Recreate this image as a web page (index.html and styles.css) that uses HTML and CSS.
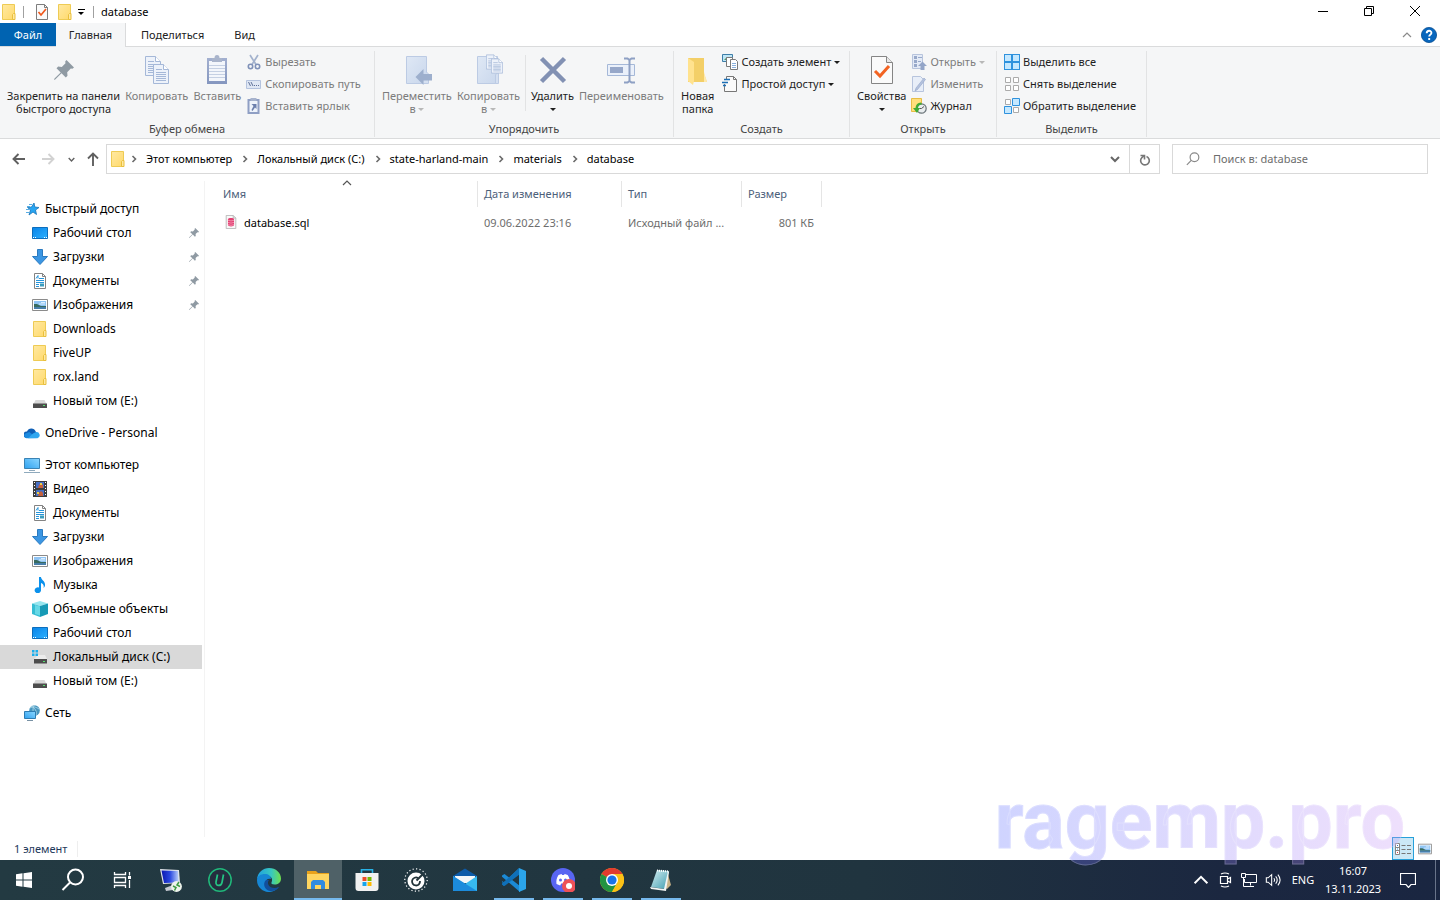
FILE: index.html
```html
<!DOCTYPE html>
<html lang="ru">
  <head>
    <meta charset="UTF-8" />
    <meta name="viewport" content="width=device-width, initial-scale=1.0" />
    <title>database</title>
    <link rel="stylesheet" href="styles.css">
  </head>
  <body>
    <svg class="sprite" aria-hidden="true">
      <defs>
        <linearGradient id="g-folder" x1="0" y1="0" x2="1" y2="1">
          <stop offset="0" stop-color="#ffe9a2"/><stop offset="1" stop-color="#ffd96b"/>
        </linearGradient>
        <linearGradient id="g-blue" x1="0" y1="0" x2="1" y2="1">
          <stop offset="0" stop-color="#0a84e8"/><stop offset="1" stop-color="#2bb0ff"/>
        </linearGradient>
        <linearGradient id="g-screen" x1="0" y1="1" x2="1" y2="0">
          <stop offset="0" stop-color="#2fa2f0"/><stop offset="1" stop-color="#8bd6ff"/>
        </linearGradient>
        <linearGradient id="g-pale" x1="0" y1="0" x2="1" y2="1">
          <stop offset="0" stop-color="#dfe8f5"/><stop offset="1" stop-color="#c9d7ec"/>
        </linearGradient>
        <linearGradient id="g-clip" x1="0" y1="0" x2="0" y2="1">
          <stop offset="0" stop-color="#a3b0d0"/><stop offset="1" stop-color="#8496bf"/>
        </linearGradient>
        <linearGradient id="g-edge" x1="0" y1="0" x2="1" y2="0">
          <stop offset="0" stop-color="#1fa0e0"/><stop offset=".6" stop-color="#38c8c0"/><stop offset="1" stop-color="#6fe04c"/>
        </linearGradient>
        <linearGradient id="g-note" x1="0" y1="0" x2="1" y2="1">
          <stop offset="0" stop-color="#d6eff2"/><stop offset="1" stop-color="#3f9db0"/>
        </linearGradient>
        <linearGradient id="g-rdp" x1="0" y1="0" x2="1" y2="0">
          <stop offset="0" stop-color="#0a18b0"/><stop offset=".5" stop-color="#2a48e0"/><stop offset="1" stop-color="#b8cdf8"/>
        </linearGradient>
      </defs>

      <symbol id="folder" viewBox="0 0 16 16">
        <path d="M1.500.500h12v15h-12z" fill="url(#g-folder)" stroke="#eecb54"/>
        <path d="M11.500 15.500v-5l1-1h1.500v6z" fill="#ffe9a2" stroke="#e9bf3c"/>
      </symbol>
      <symbol id="check-doc" viewBox="0 0 16 16">
        <path d="M2.500.500h8l3 3v12h-11z" fill="#fafafa" stroke="#7d7d7d"/>
        <path d="M10.500.500v3h3" fill="none" stroke="#7d7d7d"/>
        <path d="M4.500 8l2.500 3 5-6" fill="none" stroke="#f0581c" stroke-width="1.700"/>
      </symbol>
      <symbol id="caret" viewBox="0 0 6 3"><path d="M0 0h6L3 3z" fill="currentColor"/></symbol>
      <symbol id="chevron-right" viewBox="0 0 8 8"><path d="M2.500 1l3 3-3 3" fill="none" stroke="#6a6a6a" stroke-width="1.600"/></symbol>
      <symbol id="chevron-down" viewBox="0 0 10 10"><path d="M1 3l4 4 4-4" fill="none" stroke="currentColor" stroke-width="2"/></symbol>
      <symbol id="chevron-up" viewBox="0 0 10 10"><path d="M1 7l4-4 4 4" fill="none" stroke="currentColor" stroke-width="1.200"/></symbol>
      <symbol id="arrow" viewBox="0 0 14 14"><path d="M1.500 7H13M6.500 2l-5 5 5 5" fill="none" stroke="currentColor" stroke-width="1.900"/></symbol>
      <symbol id="arrow-up" viewBox="0 0 14 14"><path d="M7 1.500V14M2 6.500l5-5 5 5" fill="none" stroke="currentColor" stroke-width="1.900"/></symbol>

      <symbol id="pin" viewBox="0 0 20 20">
        <path d="M12.500 0L20 7.500l-1.600 1.300-1.600-.3-3.600 3.700.3 3.600-1.700 1.700-4.300-4.300L1.200 19.500 0 20l.5-1.400 6.200-6L2.500 8.300l1.700-1.800 3.600.4 3.700-3.700-.3-1.700z" fill="#8f9aa3"/>
      </symbol>
      <symbol id="sheet" viewBox="0 0 16 20">
        <path d="M.5.5h10l5 5v14H.5z" fill="#edf2fa" stroke="#a5b8d8"/>
        <path d="M10.500.500v5h5" fill="#fff" stroke="#a5b8d8"/>
        <path d="M3 5.500h6M3 8.500h10M3 10.500h10M3 12.500h10M3 14.500h10M3 16.500h10" stroke="#a5b8d8"/>
      </symbol>
      <symbol id="copy" viewBox="0 0 32 32">
        <use href="#sheet" x="4" y="2" width="16" height="20"/>
        <use href="#sheet" x="12" y="10" width="16" height="20"/>
      </symbol>
      <symbol id="paste" viewBox="0 0 32 32">
        <path d="M6 4h20v26H6z" fill="url(#g-clip)"/>
        <path d="M8 7h16v20H8z" fill="#f3f6fb"/>
        <path d="M11 4h2.500a2.500 3 0 0 1 5 0H21v4H11z" fill="#a9b4cb"/>
        <path d="M8 11.500h16M8 14.500h16M8 17.500h16M8 20.500h16M8 23.500h16" stroke="#c5d0e3"/>
      </symbol>
      <symbol id="cut" viewBox="0 0 16 16">
        <path d="M4 1l6 9.500M12 1L6 10.500" stroke="#a3b2cd" stroke-width="1.700"/>
        <circle cx="4.500" cy="12.500" r="2.200" fill="none" stroke="#7f91b8" stroke-width="1.600"/>
        <circle cx="11.500" cy="12.500" r="2.200" fill="none" stroke="#7f91b8" stroke-width="1.600"/>
      </symbol>
      <symbol id="copy-path" viewBox="0 0 16 16">
        <path d="M.5 4.500h14v8H.5z" fill="#dfe7f4" stroke="#b4c3de"/>
        <path d="M2.500 6l2 4M5 6l2 4M8 9.500h1M10 9.500h1M12 9.500h1" stroke="#5e7099"/>
      </symbol>
      <symbol id="paste-link" viewBox="0 0 16 16">
        <path d="M1.500 1h12v15h-12z" fill="#8f9fc4"/>
        <path d="M3.500 3h8v11h-8z" fill="#eef3fb"/>
        <path d="M4.500 0h6v3h-6z" fill="#a7b3cd"/>
        <path d="M5.500 6h5v5L9 9.500 6.500 13l-1-1L7.500 8z" fill="#6c80ad"/>
      </symbol>
      <symbol id="move-to" viewBox="0 0 32 32">
        <path d="M5.500 2.500h20v27h-20z" fill="url(#g-pale)" stroke="#bccbe4"/>
        <path d="M25.500 18l2 2v9.500h-5" fill="#d5e0f1" stroke="#bccbe4"/>
        <path d="M14.500 23l8-8v5H31v6.500h-8.500V31z" fill="#9dafcd"/>
      </symbol>
      <symbol id="copy-to" viewBox="0 0 32 32">
        <path d="M5.500 2.500h20v27h-20z" fill="url(#g-pale)" stroke="#bccbe4"/>
        <path d="M23.500 29.500v-9l3-2v11z" fill="#d5e0f1" stroke="#bccbe4"/>
        <use href="#sheet" x="14" y="0" width="12" height="16"/>
        <use href="#sheet" x="19" y="4" width="12" height="16"/>
      </symbol>
      <symbol id="delete" viewBox="0 0 32 32">
        <path d="M4.500 4.500l23 23M27.500 4.500l-23 23" stroke="#8291b3" stroke-width="4.500"/>
      </symbol>
      <symbol id="rename" viewBox="0 0 32 32">
        <path d="M2.500 10.500h27v11h-27z" fill="#eaf0fa" stroke="#a5b8d8"/>
        <path d="M5 13h13v6H5z" fill="#96a7c9"/>
        <path d="M19 4.500h3.500L24.500 6l2-1.500H30M19 28.500h3.500l2-1.500 2 1.500H30M24.500 5v23" fill="none" stroke="#8ea0c4" stroke-width="2"/>
      </symbol>
      <symbol id="new-folder" viewBox="0 0 32 32">
        <path d="M6 4h16v16l3 8H6z" fill="#f3cf68"/>
        <path d="M22 18l3 10h-3z" fill="#ffe9ab"/>
        <path d="M6 4l6 4v19l-1 4-5-4z" fill="#ffe28e"/>
      </symbol>
      <symbol id="new-item" viewBox="0 0 16 16">
        <path d="M.5.500h10v7H.5z" fill="#bfe6f6" stroke="#3e7ea8"/>
        <path d="M2 6l3-3 3 3z" fill="#4e9a64"/>
        <path d="M4.500 3.500h6v9h-6z" fill="#fff" stroke="#7a7a7a"/>
        <path d="M8.500 5.500h5l2 2v8h-7z" fill="#fff" stroke="#7a7a7a"/>
        <path d="M10 9.500h4M10 11.500h4M10 13.500h4" stroke="#8ab0dc"/>
      </symbol>
      <symbol id="easy-access" viewBox="0 0 16 16">
        <path d="M2.500 8v7.500h12v-12l-3-3h-7V3" fill="#fafafa" stroke="#777"/>
        <path d="M11.500.500v3h3" fill="none" stroke="#777"/>
        <path d="M2 3.500h6M0 6.500h6M1 9.500h3" stroke="#1d6fb5" stroke-width="1.300"/>
      </symbol>
      <symbol id="properties" viewBox="0 0 32 32">
        <path d="M5.500 2.500h15l6 6v21h-21z" fill="#fafafa" stroke="#858585"/>
        <path d="M20.500 2.500v6h6" fill="#e8e8e8" stroke="#858585"/>
        <path d="M9 17l5 5 9-10" fill="none" stroke="#f26322" stroke-width="3"/>
      </symbol>
      <symbol id="open" viewBox="0 0 16 16">
        <path d="M1.500.500h10v14h-10z" fill="#e3eaf6" stroke="#b7c4dd"/>
        <path d="M3 2h3v3H3zM3 6h3v3H3zM3 10h3v3H3z" fill="#98a9ca"/>
        <path d="M7 3.500h4M7 7.500h3" stroke="#98a9ca"/>
        <path d="M9.500 16v-4H7l4.500-4.500L16 12h-2.500v4z" fill="#93a5c8"/>
      </symbol>
      <symbol id="edit" viewBox="0 0 16 16">
        <path d="M1.500.500h8l3 3v12h-11z" fill="#e8eef8" stroke="#b7c4dd"/>
        <path d="M4 15l1-3L13 2l1.500 1.500L6.500 13.500z" fill="#b4c2de" stroke="#93a5c8" stroke-width=".6"/>
      </symbol>
      <symbol id="history" viewBox="0 0 16 16">
        <path d="M.5.500h10v13H.5z" fill="#ffdf7c" stroke="#e7bd45"/>
        <circle cx="10.500" cy="10.500" r="4.700" fill="#e9edef" stroke="#6a7479" stroke-width="1.200"/>
        <path d="M10.500 10.500l2.500-2M10.500 10.500h-2" stroke="#555"/>
        <path d="M10 4.500A6 6 0 0 0 4.500 10H2l4 5 3-5H7a4 4 0 0 1 4-3.500z" fill="#3faa35"/>
      </symbol>
      <symbol id="select-all" viewBox="0 0 16 16">
        <path d="M0 0h16v16H0z" fill="#2f92dd"/>
        <path d="M1 1h6v6H1zM9 1h6v6H9zM1 9h6v6H1zM9 9h6v6H9z" fill="#c5e8ff"/>
      </symbol>
      <symbol id="select-none" viewBox="0 0 16 16">
        <path d="M1.500 1.500h5v5h-5zM9.500 1.500h5v5h-5zM1.500 9.500h5v5h-5zM9.500 9.500h5v5h-5z" fill="#fff" stroke="#ababab"/>
      </symbol>
      <symbol id="select-invert" viewBox="0 0 16 16">
        <path d="M1.500 1.500h5v5h-5zM9.500 9.500h5v5h-5z" fill="#fff" stroke="#ababab"/>
        <path d="M8.500.500h7v7h-7zM.5 8.500h7v7h-7z" fill="#c5e8ff" stroke="#2f92dd"/>
      </symbol>

      <symbol id="star" viewBox="0 0 16 16">
        <path d="M10 2l.8 4 4.200.5-3.500 2.500 1 4.500-3.500-2.500-4 3 1.500-5-3-2.500 4-.5z" fill="#27a5f2" stroke="#1874b8" stroke-width=".8"/>
        <path d="M5 3.500h3M3 5.500h3M2 8.500h3M2 11.500h3" stroke="#59aee4"/>
      </symbol>
      <symbol id="desktop" viewBox="0 0 16 16">
        <path d="M.5 2.500h15v11H.5z" fill="url(#g-blue)" stroke="#0d6ebd"/>
        <path d="M1 12.500h1M3 12.500h1M12 12.500h1M14 12.500h1" stroke="#fff"/>
      </symbol>
      <symbol id="download" viewBox="0 0 16 16">
        <path d="M5.500.500h5v7h5L8 15.500.5 7.500h5z" fill="#3b96e3" stroke="#2a7ac0"/>
      </symbol>
      <symbol id="document" viewBox="0 0 16 16">
        <path d="M2.500.500h8l3 3v12h-11z" fill="#fff" stroke="#838383"/>
        <path d="M10.500.500v3h3" fill="none" stroke="#838383"/>
        <path d="M4 5.500l2-3v3M7 5.500h5M4 7.500h8M4 9.500h8M4 11.500h3M4 13.500h3" fill="none" stroke="#2795da"/>
        <path d="M8 10.500h4v3H8z" fill="#3c9cbd"/>
      </symbol>
      <symbol id="picture" viewBox="0 0 16 16">
        <path d="M.5 2.500h15v11H.5z" fill="#fff" stroke="#8b8b8b"/>
        <path d="M2 4h12v8H2z" fill="#8fc4f4"/>
        <path d="M2 7h3l4 2h5v1H2z" fill="#386b60"/>
        <path d="M2 10h12v2H2z" fill="#477eaa"/>
        <path d="M9 5.500h4M7 7h6" stroke="#dcefff"/>
      </symbol>
      <symbol id="drive" viewBox="0 0 16 16">
        <path d="M3.500 7h9l2 4h-13z" fill="#d9d9d9"/>
        <path d="M1 10.500h14V15H1z" fill="#4d4d4d"/>
        <path d="M11 12.500h2" stroke="#55e06c" stroke-width="1.200"/>
      </symbol>
      <symbol id="system-drive" viewBox="0 0 16 16">
        <path d="M6 6h7l2 4H2z" fill="#ececec"/>
        <path d="M2 10h13v4.500H2z" fill="#4d4d4d"/>
        <path d="M11 12.500h2" stroke="#55e06c" stroke-width="1.200"/>
        <path d="M0 1h2.500v2.500H0zM3.500 1H6v2.500H3.500zM0 4.500h2.500V7H0zM3.500 4.500H6V7H3.500z" fill="#18aeee"/>
      </symbol>
      <symbol id="onedrive" viewBox="0 0 16 16">
        <path d="M3 6.500a4.700 4.700 0 0 1 8.700 0L14 10l-5 3H2.500A3.200 3.200 0 0 1 3 6.500z" fill="#0f5fb6"/>
        <path d="M2.500 13.200a2.800 2.800 0 0 1-1.700-4.500l4.500-1.800 7.700 6z" fill="#1a8adf"/>
        <path d="M9 8.500l2.500-1.300a3 3 0 0 1 2 6H4z" fill="#30a7f0"/>
      </symbol>
      <symbol id="computer" viewBox="0 0 16 16">
        <path d="M.5 1.500h15v10H.5z" fill="url(#g-screen)" stroke="#3a83b4"/>
        <path d="M5 13.500h6M0 15.500h16" stroke="#8faabd"/>
      </symbol>
      <symbol id="video" viewBox="0 0 16 16">
        <path d="M1 0h14v16H1z" fill="#3d3d3d"/>
        <path d="M4 1h8v6H4zM4 9h8v6H4z" fill="#476fc4"/>
        <path d="M7 4l2-2 2 2v3H6zM7 12l2-2 2 2v3H6z" fill="#c5603c"/>
        <path d="M8 2h2v2H8zM5 11h2v2H5z" fill="#e8cf47"/>
        <path d="M2.500 1v14M13.500 1v14" stroke="#fff" stroke-dasharray="1 2"/>
      </symbol>
      <symbol id="music" viewBox="0 0 16 16">
        <path d="M7 0h2c0 3 4.500 4 4 8.500-.2 1.200-.8 2-1.500 2.500.8-3-.5-4-2.500-5v7A3.200 3 0 1 1 7 10.500z" fill="#0b91ec"/>
      </symbol>
      <symbol id="cube" viewBox="0 0 16 16">
        <path d="M0 2.500L8 0l8 2.500L8 5z" fill="#97e6ef"/>
        <path d="M0 2.500L8 5v11l-8-3z" fill="#36bdd3"/>
        <path d="M8 5l8-2.500V13l-8 3z" fill="#179ab6"/>
        <path d="M3 4l5 1.500v9L3 13z" fill="#66d8e6"/>
      </symbol>
      <symbol id="network" viewBox="0 0 16 16">
        <circle cx="10.500" cy="5.500" r="5.300" fill="#4695be"/>
        <path d="M6 3c3-2 6-1 9 1M7 1c4 2 6 5 5 9M10.500 0c-2 3-2 7 0 10" fill="none" stroke="#b6deee" stroke-width=".8"/>
        <path d="M.5 6.500h11v7H.5z" fill="url(#g-screen)" stroke="#2d7cb2"/>
        <path d="M3 15.500h6" stroke="#7891a4"/>
      </symbol>
      <symbol id="sql-file" viewBox="0 0 16 16">
        <path d="M2.500.500h8l3 3v12h-11z" fill="#f8f8f8" stroke="#b5b5b5"/>
        <path d="M10.500.500v3h3" fill="none" stroke="#b5b5b5"/>
        <path d="M4.500 5c0-2 7-2 7 0v6.500c0 2-7 2-7 0z" fill="#e33e71"/>
        <path d="M4.500 6q3.500 1.500 7 0M4.500 8.500q3.500 1.500 7 0M4.500 11q3.500 1.500 7 0" fill="none" stroke="#f6b1c6" stroke-width=".8"/>
      </symbol>
      <symbol id="details" viewBox="0 0 16 16">
        <path d="M.5 2.500h4v11h-4zM.5 6.500h4M.5 9.500h4" fill="#fff" stroke="#858585"/>
        <path d="M2 4.500h1" stroke="#357abf"/><path d="M2 8h1" stroke="#3596d4"/><path d="M2 11.500h1" stroke="#df4040"/>
        <path d="M6.500 4.500h4M12 4.500h4M6.500 8.500h4M12 8.500h4M6.500 12.500h4M12 12.500h4" stroke="#777"/>
      </symbol>
      <symbol id="help" viewBox="0 0 16 16">
        <circle cx="8" cy="8" r="7.600" fill="#0866bd" stroke="#084e92" stroke-width=".8"/>
        <path d="M5.700 6.300c0-3.400 4.900-3.200 4.700-.3-.1 1.600-2.200 1.700-2.200 3.600M8.200 10.900v2" fill="none" stroke="#fff" stroke-width="1.900"/>
      </symbol>
      <symbol id="refresh" viewBox="0 0 12 12">
        <path d="M7.500 2.600A4.300 4.300 0 1 1 2.800 3.700L5 1.800" fill="none" stroke="#777" stroke-width="1.600"/>
        <path d="M1.500 1.500h4v4" fill="none" stroke="#777" stroke-width="1.600"/>
      </symbol>
      <symbol id="magnifier" viewBox="0 0 24 24">
        <circle cx="14.500" cy="9" r="7.500" fill="none" stroke="currentColor" stroke-width="2"/>
        <path d="M9 14.500L1.500 22" stroke="currentColor" stroke-width="2"/>
      </symbol>

      <symbol id="windows" viewBox="0 0 16 16">
        <path d="M0 2.200L6.500 1.300v6.200H0zM7.500 1.200L16 0v7.500H7.500zM0 8.500h6.500v6.200L0 13.800zM7.500 8.500H16V16l-8.500-1.200z" fill="#fff"/>
      </symbol>
      <symbol id="task-view" viewBox="0 0 18 18">
        <path d="M1.500 1v2.500h11V1M1.500 17v-2.500h11V17M1.500 6.500h11v5h-11zM16.500 1v3.500M16.500 9v8" fill="none" stroke="#fff" stroke-width="1.300"/>
        <path d="M15 5h3v3h-3z" fill="#fff"/>
      </symbol>
      <symbol id="remote" viewBox="0 0 24 24">
        <path d="M1 1l19 1 1 13-17 1z" fill="#dfe3ea"/>
        <path d="M2.500 2.500l16.500.500.500 11.500-14.500.500z" fill="url(#g-rdp)"/>
        <path d="M6 20l8-3v5l-7 1z" fill="#c7cbd3"/>
        <circle cx="17.500" cy="18.500" r="5.400" fill="#eef3ec"/>
        <path d="M14 18l3 1.500-1.500 3M21 18.500L18 17l2-3" fill="none" stroke="#3c9b42" stroke-width="1.500"/>
      </symbol>
      <symbol id="uninstaller" viewBox="0 0 24 24">
        <circle cx="12" cy="12" r="11.200" fill="#252d3e" stroke="#20b87a" stroke-width="1.500"/>
        <path d="M9.500 6.500L8 14c-.7 4.500 5.200 4.500 6 .5l1.500-8" fill="none" stroke="#25c483" stroke-width="1.700"/>
      </symbol>
      <symbol id="edge" viewBox="0 0 24 24">
        <path d="M0 11C1 4 6 0 12 0c7 0 12 5 12 10.500 0 4-3 6-6.500 6-2.500 0-3.500-1-3-2 2-4-1-7-5-7S1 9 0 11z" fill="url(#g-edge)"/>
        <path d="M0 12c0-4 4-6 8-6 3.500 0 6 2 6 5-4-1-6 2-5 5 1 5 7 6 12 3.500C17 25 9 25.500 4 21a12 12 0 0 1-4-9z" fill="#1686d4"/>
        <path d="M9 12c-4 4-1 10 4 11 4 .5 7.500-1.500 9.500-4-5 2-9.500 1-11-2-1-2-.5-4 .5-5z" fill="#124f9c"/>
      </symbol>
      <symbol id="explorer" viewBox="0 0 24 24">
        <path d="M1 3h9l2 2h11v4H1z" fill="#e9a21b"/>
        <path d="M1 6h22v15H1z" fill="#ffd560"/>
        <path d="M5 21v-7l2-2h10l2 2v7h-4v-4H9v4z" fill="#318be0"/>
      </symbol>
      <symbol id="store" viewBox="0 0 24 24">
        <path d="M6.500 6V1.700h11V6" fill="none" stroke="#28b3e7" stroke-width="1.600"/>
        <path d="M.5 5h23v15a3 3 0 0 1-3 3h-17a3 3 0 0 1-3-3z" fill="#f1f1f1"/>
        <path d="M7.500 9h4v4h-4z" fill="#ee4d28"/><path d="M12.500 9h4v4h-4z" fill="#76b900"/>
        <path d="M7.500 14h4v4h-4z" fill="#15a4ee"/><path d="M12.500 14h4v4h-4z" fill="#ffb900"/>
      </symbol>
      <symbol id="gauge" viewBox="0 0 24 24">
        <circle cx="12" cy="12" r="11.200" fill="none" stroke="#fff" stroke-width="1.200" stroke-dasharray="1.200 2.300"/>
        <circle cx="12" cy="13" r="8.500" fill="#fff"/>
        <path d="M14 10a4 4 0 1 0 2 3" fill="none" stroke="#22343a" stroke-width="1.800"/>
        <path d="M12.500 12.500l6-6" stroke="#22343a" stroke-width="2"/>
      </symbol>
      <symbol id="mail" viewBox="0 0 24 24">
        <path d="M0 8l12-7.500L24 8v6H0z" fill="#0d5ba9"/>
        <path d="M2 8h20v7H2z" fill="#f3f6f8"/>
        <path d="M0 8l12 8 12-8v15H0z" fill="#37b9ee"/>
        <path d="M0 23V8l24 15z" fill="#1c8bdc"/>
      </symbol>
      <symbol id="vscode" viewBox="0 0 24 24">
        <path d="M17 0L2 14.500l-2-1.700L1.500 18 17 6z" fill="#1684cf"/>
        <path d="M0 7.500L2.500 6 18 18v6L0 8.800z" fill="#1b8ad6"/>
        <path d="M17 .5L0 15.500v1.300L2.500 18 18 6z" fill="#0f70b9"/>
        <path d="M17 0l7 3v18l-7 3z" fill="#2ba5ec"/>
      </symbol>
      <symbol id="discord" viewBox="0 0 24 24">
        <circle cx="12" cy="12" r="12" fill="#5865f2"/>
        <path d="M7.500 7l3-1 .7 1h1.800l.7-1 3 1c2 3 2.500 6 2 9l-3.500 1.500-1-2h-4l-1 2L5.500 16c-.4-3 0-6 2-9z" fill="#fff"/>
        <circle cx="9.500" cy="12" r="1.500" fill="#5865f2"/><circle cx="14.500" cy="12" r="1.500" fill="#5865f2"/>
        <circle cx="18" cy="18" r="7" fill="#ee5157"/><circle cx="18" cy="18" r="3" fill="#fff"/>
      </symbol>
      <symbol id="chrome" viewBox="0 0 24 24">
        <circle cx="12" cy="12" r="12" fill="#fbc116"/>
        <path d="M12 12L1.600 6A12 12 0 0 1 22.400 6H12z" fill="#e33b2e"/>
        <path d="M1.600 6A12 12 0 0 0 12 24l5-9-5-3z" fill="#229342"/>
        <path d="M12 6h10.400A12 12 0 0 1 12 24l5.200-9z" fill="#fbc116"/>
        <circle cx="12" cy="12" r="6" fill="#fff"/><circle cx="12" cy="12" r="4.600" fill="#1a73e8"/>
      </symbol>
      <symbol id="notepad" viewBox="0 0 24 24">
        <path d="M18 3l4 14-4 4-3-2z" fill="#c7b287"/>
        <path d="M8 2l12 1-4 18-14-2z" fill="url(#g-note)"/>
        <path d="M1 19l14 2 4-18 1 1-3 19-15-2z" fill="#f0f4f3"/>
        <path d="M8 2.500l12 1" stroke="#fff" stroke-width="2" stroke-dasharray="1 1"/>
      </symbol>
      <symbol id="tray-camera" viewBox="0 0 16 16">
        <path d="M3.500 4.500h7v7h-7zM10.500 7l3-1.500v5l-3-1.500M4 2q4-2 8 0M4 14q4 2 8 0" fill="none" stroke="#fff" stroke-width="1.200"/>
      </symbol>
      <symbol id="tray-network" viewBox="0 0 16 16">
        <path d="M5 2.500h10.500v8h-12V7M9.500 10.500v3M6 14.500h7M.5 1.500h4v4h-4zM2.500 5.500v9H6" fill="none" stroke="#fff"/>
      </symbol>
      <symbol id="tray-volume" viewBox="0 0 18 16">
        <path d="M1.500 5.500h2l4-3.500v12l-4-3.500h-2zM10 6q1.500 2 0 4M12 4q3.500 4 0 8M14.500 2q5 6 0 12" fill="none" stroke="#fff" stroke-width="1.200"/>
      </symbol>
      <symbol id="tray-notify" viewBox="0 0 16 16">
        <path d="M.5 1.500h15v11H11l-2.500 3-2.500-3H.5z" fill="none" stroke="#fff" stroke-width="1.200"/>
      </symbol>
    </svg>

    <header class="titlebar">
      <svg class="icon"><use href="#folder"/></svg>
      <span class="tick"></span>
      <button class="quick" aria-label="Свойства"><svg class="icon"><use href="#check-doc"/></svg></button>
      <button class="quick" aria-label="Новая папка"><svg class="icon"><use href="#folder"/></svg></button>
      <button class="quick-menu" aria-label="Настройка панели"><svg class="caret"><use href="#caret"/></svg></button>
      <span class="tick last"></span>
      <h1>database</h1>
      <div class="window-buttons">
        <button aria-label="Свернуть"><svg viewBox="0 0 10 10"><path d="M0 5.500h10"/></svg></button>
        <button aria-label="Восстановить"><svg viewBox="0 0 10 10"><path d="M.5 2.500h7v7h-7zM2.500 2.500v-2h7v7h-2"/></svg></button>
        <button aria-label="Закрыть"><svg viewBox="0 0 10 10"><path d="M0 0l10 10M10 0L0 10"/></svg></button>
      </div>
    </header>

    <nav class="tabs">
      <button class="tab file">Файл</button>
      <button class="tab active">Главная</button>
      <button class="tab">Поделиться</button>
      <button class="tab">Вид</button>
      <div class="tabs-right">
        <button class="collapse" aria-label="Свернуть ленту"><svg class="chevron"><use href="#chevron-up"/></svg></button>
        <button aria-label="Справка"><svg class="icon"><use href="#help"/></svg></button>
      </div>
    </nav>

    <section class="ribbon">
      <div class="group clipboard">
        <div class="group-body">
          <button class="big"><svg class="pin-icon"><use href="#pin"/></svg><span>Закрепить на панели<br>быстрого доступа</span></button>
          <button class="big" disabled><svg><use href="#copy"/></svg><span>Копировать</span></button>
          <button class="big" disabled><svg><use href="#paste"/></svg><span>Вставить</span></button>
          <div class="small-list">
            <button disabled><svg class="icon"><use href="#cut"/></svg>Вырезать</button>
            <button disabled><svg class="icon"><use href="#copy-path"/></svg>Скопировать путь</button>
            <button disabled><svg class="icon"><use href="#paste-link"/></svg>Вставить ярлык</button>
          </div>
        </div>
        <h2>Буфер обмена</h2>
      </div>
      <div class="group organize">
        <div class="group-body">
          <button class="big" disabled><svg><use href="#move-to"/></svg><span>Переместить<br>в <svg class="caret"><use href="#caret"/></svg></span></button>
          <button class="big" disabled><svg><use href="#copy-to"/></svg><span>Копировать<br>в <svg class="caret"><use href="#caret"/></svg></span></button>
          <span class="divider"></span>
          <button class="big"><svg><use href="#delete"/></svg><span>Удалить<br><svg class="caret"><use href="#caret"/></svg></span></button>
          <button class="big" disabled><svg><use href="#rename"/></svg><span>Переименовать</span></button>
        </div>
        <h2>Упорядочить</h2>
      </div>
      <div class="group create">
        <div class="group-body">
          <button class="big"><svg><use href="#new-folder"/></svg><span>Новая<br>папка</span></button>
          <div class="small-list">
            <button><svg class="icon"><use href="#new-item"/></svg>Создать элемент<svg class="caret"><use href="#caret"/></svg></button>
            <button><svg class="icon"><use href="#easy-access"/></svg>Простой доступ<svg class="caret"><use href="#caret"/></svg></button>
          </div>
        </div>
        <h2>Создать</h2>
      </div>
      <div class="group open">
        <div class="group-body">
          <button class="big"><svg><use href="#properties"/></svg><span>Свойства<br><svg class="caret"><use href="#caret"/></svg></span></button>
          <div class="small-list">
            <button disabled><svg class="icon"><use href="#open"/></svg>Открыть<svg class="caret"><use href="#caret"/></svg></button>
            <button disabled><svg class="icon"><use href="#edit"/></svg>Изменить</button>
            <button><svg class="icon"><use href="#history"/></svg>Журнал</button>
          </div>
        </div>
        <h2>Открыть</h2>
      </div>
      <div class="group select">
        <div class="group-body">
          <div class="small-list">
            <button><svg class="icon"><use href="#select-all"/></svg>Выделить все</button>
            <button><svg class="icon"><use href="#select-none"/></svg>Снять выделение</button>
            <button><svg class="icon"><use href="#select-invert"/></svg>Обратить выделение</button>
          </div>
        </div>
        <h2>Выделить</h2>
      </div>
    </section>

    <div class="addressbar">
      <div class="history">
        <button aria-label="Назад"><svg class="arrow"><use href="#arrow"/></svg></button>
        <button class="forward" aria-label="Вперед" disabled><svg class="arrow"><use href="#arrow"/></svg></button>
        <button class="recent" aria-label="Последние расположения"><svg class="mini"><use href="#chevron-down"/></svg></button>
        <button class="up" aria-label="Вверх"><svg class="arrow"><use href="#arrow-up"/></svg></button>
      </div>
      <div class="path">
        <svg class="icon"><use href="#folder"/></svg>
        <svg class="sep"><use href="#chevron-right"/></svg>
        <a href="#">Этот компьютер</a>
        <svg class="sep"><use href="#chevron-right"/></svg>
        <a href="#">Локальный диск (C:)</a>
        <svg class="sep"><use href="#chevron-right"/></svg>
        <a href="#">state-harland-main</a>
        <svg class="sep"><use href="#chevron-right"/></svg>
        <a href="#">materials</a>
        <svg class="sep"><use href="#chevron-right"/></svg>
        <a href="#">database</a>
        <button class="path-menu" aria-label="Предыдущие расположения"><svg class="chevron"><use href="#chevron-down"/></svg></button>
        <button class="refresh" aria-label="Обновить"><svg><use href="#refresh"/></svg></button>
      </div>
      <label class="search">
        <svg><use href="#magnifier"/></svg>
        <input type="text" placeholder="Поиск в: database" aria-label="Поиск в: database" />
      </label>
    </div>

    <main class="content">
      <nav class="tree">
        <ul>
          <li><a class="root" href="#"><svg class="icon"><use href="#star"/></svg>Быстрый доступ</a></li>
          <li><a href="#"><svg class="icon"><use href="#desktop"/></svg>Рабочий стол<svg class="pinned"><use href="#pin"/></svg></a></li>
          <li><a href="#"><svg class="icon"><use href="#download"/></svg>Загрузки<svg class="pinned"><use href="#pin"/></svg></a></li>
          <li><a href="#"><svg class="icon"><use href="#document"/></svg>Документы<svg class="pinned"><use href="#pin"/></svg></a></li>
          <li><a href="#"><svg class="icon"><use href="#picture"/></svg>Изображения<svg class="pinned"><use href="#pin"/></svg></a></li>
          <li><a href="#"><svg class="icon"><use href="#folder"/></svg>Downloads</a></li>
          <li><a href="#"><svg class="icon"><use href="#folder"/></svg>FiveUP</a></li>
          <li><a href="#"><svg class="icon"><use href="#folder"/></svg>rox.land</a></li>
          <li><a href="#"><svg class="icon"><use href="#drive"/></svg>Новый том (E:)</a></li>
        </ul>
        <ul>
          <li><a class="root" href="#"><svg class="icon"><use href="#onedrive"/></svg>OneDrive - Personal</a></li>
        </ul>
        <ul>
          <li><a class="root" href="#"><svg class="icon"><use href="#computer"/></svg>Этот компьютер</a></li>
          <li><a href="#"><svg class="icon"><use href="#video"/></svg>Видео</a></li>
          <li><a href="#"><svg class="icon"><use href="#document"/></svg>Документы</a></li>
          <li><a href="#"><svg class="icon"><use href="#download"/></svg>Загрузки</a></li>
          <li><a href="#"><svg class="icon"><use href="#picture"/></svg>Изображения</a></li>
          <li><a href="#"><svg class="icon"><use href="#music"/></svg>Музыка</a></li>
          <li><a href="#"><svg class="icon"><use href="#cube"/></svg>Объемные объекты</a></li>
          <li><a href="#"><svg class="icon"><use href="#desktop"/></svg>Рабочий стол</a></li>
          <li><a class="selected" href="#"><svg class="icon"><use href="#system-drive"/></svg>Локальный диск (C:)</a></li>
          <li><a href="#"><svg class="icon"><use href="#drive"/></svg>Новый том (E:)</a></li>
        </ul>
        <ul>
          <li><a class="root" href="#"><svg class="icon"><use href="#network"/></svg>Сеть</a></li>
        </ul>
      </nav>
      <div class="files">
        <table>
          <thead>
            <tr>
              <th class="col-name">Имя<svg class="sort"><use href="#chevron-up"/></svg></th>
              <th class="col-date">Дата изменения</th>
              <th class="col-type">Тип</th>
              <th class="col-size">Размер</th>
            </tr>
          </thead>
          <tbody>
            <tr>
              <td class="name"><svg class="icon"><use href="#sql-file"/></svg>database.sql</td>
              <td>09.06.2022 23:16</td>
              <td>Исходный файл ...</td>
              <td class="size">801 КБ</td>
            </tr>
          </tbody>
        </table>
      </div>
    </main>

    <footer class="statusbar">
      <span class="count">1 элемент</span>
      <div class="views">
        <button class="active" aria-label="Таблица"><svg class="icon"><use href="#details"/></svg></button>
        <button aria-label="Крупные значки"><svg class="icon"><use href="#picture"/></svg></button>
      </div>
    </footer>

    <div class="taskbar">
      <div class="apps">
        <button aria-label="Пуск"><svg class="start"><use href="#windows"/></svg></button>
        <button aria-label="Поиск"><svg><use href="#magnifier"/></svg></button>
        <button aria-label="Представление задач"><svg class="tasks"><use href="#task-view"/></svg></button>
        <button aria-label="Удаленный рабочий стол"><svg><use href="#remote"/></svg></button>
        <button aria-label="Uninstaller"><svg><use href="#uninstaller"/></svg></button>
        <button aria-label="Edge"><svg><use href="#edge"/></svg></button>
        <button class="current" aria-label="Проводник"><svg><use href="#explorer"/></svg></button>
        <button aria-label="Store"><svg><use href="#store"/></svg></button>
        <button aria-label="Монитор"><svg><use href="#gauge"/></svg></button>
        <button aria-label="Почта"><svg><use href="#mail"/></svg></button>
        <button class="running" aria-label="VS Code"><svg><use href="#vscode"/></svg></button>
        <button class="running" aria-label="Discord"><svg><use href="#discord"/></svg></button>
        <button class="running" aria-label="Chrome"><svg><use href="#chrome"/></svg></button>
        <button class="running" aria-label="Блокнот"><svg><use href="#notepad"/></svg></button>
      </div>
      <div class="tray">
        <button aria-label="Скрытые значки"><svg><use href="#chevron-up"/></svg></button>
        <button aria-label="Камера"><svg><use href="#tray-camera"/></svg></button>
        <button aria-label="Сеть"><svg><use href="#tray-network"/></svg></button>
        <button aria-label="Громкость"><svg><use href="#tray-volume"/></svg></button>
        <button class="lang">ENG</button>
        <button class="clock">16:07<br>13.11.2023</button>
        <button class="notify" aria-label="Уведомления"><svg><use href="#tray-notify"/></svg></button>
      </div>
    </div>

    <div class="watermark">ragemp.pro</div>
  </body>
</html>
```
FILE: styles.css
```css
* {
  box-sizing: border-box;
}

body {
  margin: 0;
  height: 100vh;
  display: flex;
  flex-direction: column;
  position: relative;
  overflow: hidden;
  background-color: #fff;
  color: #000;
  font-family: "Noto Sans", "Open Sans", sans-serif;
  font-size: 11px;
  line-height: 16px;
}

button {
  border: none;
  background: none;
  padding: 0;
  margin: 0;
  color: inherit;
  font: inherit;
}

a {
  color: inherit;
  text-decoration: none;
}

h1, h2 {
  margin: 0;
  font-size: inherit;
  font-weight: normal;
}

ul {
  list-style: none;
  margin: 0;
  padding: 0;
}

svg {
  flex: none;
}

.sprite {
  position: absolute;
  width: 0;
  height: 0;
}

.icon {
  width: 16px;
  height: 16px;
}

.caret {
  width: 6px;
  height: 3px;
}

.chevron {
  width: 10px;
  height: 10px;
}

/* title bar */
.titlebar {
  display: flex;
  align-items: center;
  height: 23px;
  padding: 0 2px 0 1px;
}

.tick {
  width: 1px;
  height: 12px;
  margin: 0 6px;
  background-color: #a0a0a0;
}

.tick.last {
  margin: 0 7px 0 8px;
}

.titlebar h1 {
  flex: 1;
}

.quick {
  display: flex;
  width: 23px;
  justify-content: center;
}

.quick-menu {
  display: flex;
  flex-direction: column;
  align-items: center;
  gap: 2px;
  width: 8px;
  margin-left: 1px;
}

.quick-menu::before {
  content: "";
  width: 7px;
  height: 1px;
  background-color: #000;
}

.window-buttons {
  display: flex;
}

.window-buttons button {
  width: 46px;
  height: 22px;
}

.window-buttons svg {
  width: 10px;
  height: 10px;
  fill: none;
  stroke: #000;
}

/* ribbon tabs */
.tabs {
  display: flex;
  height: 24px;
  border-bottom: 1px solid #dadbdc;
}

.tab {
  height: 23px;
  padding: 0 15px;
  color: #222;
}

.tab.file {
  width: 56px;
  padding: 0;
  background-color: #0063b1;
  color: #fff;
}

.tab.active {
  width: 70px;
  height: 24px;
  padding: 0;
  background-color: #f5f6f7;
  border-right: 1px solid #dadbdc;
}

.tabs-right {
  display: flex;
  align-items: center;
  gap: 9px;
  margin-left: auto;
  padding-right: 3px;
}

.tabs-right button {
  display: flex;
}

.collapse {
  color: #8a8a8a;
}

/* ribbon */
.ribbon {
  display: flex;
  height: 92px;
  padding-top: 4px;
  background-color: #f5f6f7;
  border-bottom: 1px solid #dadbdc;
  color: #1e1e1e;
}

.group {
  display: flex;
  flex-direction: column;
  height: 86px;
  border-right: 1px solid #e2e3e4;
  white-space: nowrap;
}

.group-body {
  display: flex;
  flex: 1;
  gap: 5px;
  padding: 0 7px;
}

.group h2 {
  text-align: center;
  color: #444;
}

.clipboard { width: 375px; }
.organize { width: 299px; }
.create { width: 176px; }
.open { width: 147px; }
.select { width: 150px; }

.create .group-body {
  gap: 8px;
}

.big {
  display: flex;
  flex-direction: column;
  align-items: center;
  line-height: 13px;
}

.big > svg {
  width: 32px;
  height: 32px;
  margin: 3px 0;
}

.big > .pin-icon {
  padding: 6px;
}

.big .caret {
  vertical-align: 2px;
}

.ribbon button:disabled {
  color: #7c7c7c;
}

.ribbon button:disabled .caret {
  color: #b8b8b8;
}

.small-list button {
  display: flex;
  align-items: center;
  gap: 3px;
  height: 22px;
}

.divider {
  width: 1px;
  height: 56px;
  margin-top: 4px;
  background-color: #e2e3e4;
}

/* address bar */
.addressbar {
  display: flex;
  align-items: center;
  height: 40px;
  margin-bottom: 2px;
  padding: 0 12px;
}

.history {
  display: flex;
  align-items: center;
  width: 94px;
  color: #606060;
}

.history button {
  display: flex;
}

.arrow {
  width: 14px;
  height: 14px;
}

.history .forward {
  margin-left: 15px;
  transform: scaleX(-1);
  color: #d2d2d2;
}

.history .recent {
  margin-left: 13px;
}

.history .up {
  margin-left: 11px;
}

.mini {
  width: 7px;
  height: 7px;
}

.path {
  display: flex;
  flex: 1;
  align-items: center;
  height: 30px;
  padding-left: 3px;
  border: 1px solid #d9d9d9;
}

.path .sep {
  width: 8px;
  height: 8px;
  margin: 0 8px 0 9px;
}

.path .icon + .sep {
  margin-left: 4px;
}

.path-menu {
  display: flex;
  margin-left: auto;
  padding: 9px;
  color: #666;
}

.refresh {
  width: 30px;
  height: 28px;
  border-left: 1px solid #d9d9d9;
}

.refresh svg {
  width: 12px;
  height: 12px;
  vertical-align: middle;
}

.search {
  display: flex;
  align-items: center;
  gap: 13px;
  width: 256px;
  height: 30px;
  margin-left: 12px;
  padding: 0 13px;
  border: 1px solid #d9d9d9;
  color: #888;
}

.search svg {
  width: 14px;
  height: 14px;
}

.search input {
  flex: 1;
  min-width: 0;
  padding: 0;
  border: none;
  outline: none;
  font: inherit;
}

.search input::placeholder {
  color: #6d6d6d;
}

/* navigation tree and file list */
.content {
  display: flex;
  flex: 1;
  min-height: 0;
}

.tree {
  width: 205px;
  padding: 16px 2px 0 0;
  border-right: 1px solid #f3f3f3;
  font-size: 12px;
}

.tree ul {
  margin-bottom: 8px;
}

.tree a {
  display: flex;
  align-items: center;
  gap: 5px;
  height: 24px;
  padding-left: 32px;
}

.tree .root {
  padding-left: 24px;
}

.tree .selected {
  background-color: #d9d9d9;
}

.tree .pinned {
  width: 10px;
  height: 10px;
  margin-left: auto;
  margin-right: 3px;
}

.files {
  flex: 1;
}

.files table {
  width: 617px;
  table-layout: fixed;
  border-collapse: separate;
  border-spacing: 0;
}

.files th {
  height: 26px;
  padding: 0 0 0 6px;
  border-right: 1px solid #e5e5e5;
  color: #4c607a;
  font-weight: normal;
  text-align: left;
}

.files td {
  height: 32px;
  padding: 0 0 0 6px;
  color: #6d6d6d;
  white-space: nowrap;
}

.files .col-name {
  position: relative;
  width: 273px;
  padding-left: 18px;
}

.col-date { width: 144px; }
.col-type { width: 120px; }
.col-size { width: 80px; }

.sort {
  position: absolute;
  top: -3px;
  left: 137px;
  width: 10px;
  height: 10px;
  color: #555;
}

.files .name {
  padding-left: 18px;
  color: #000;
}

.name .icon {
  width: 16px;
  height: 14px;
  margin-right: 5px;
  vertical-align: -2px;
}

.files .size {
  padding-right: 8px;
  text-align: right;
}

/* status bar */
.statusbar {
  display: flex;
  align-items: center;
  justify-content: space-between;
  height: 23px;
  padding: 0 4px 0 14px;
  color: #1e395b;
}

.count {
  padding-right: 10px;
  border-right: 1px solid #eee;
}

.views {
  display: flex;
}

.views button {
  display: flex;
  align-items: center;
  justify-content: center;
  width: 22px;
  height: 23px;
}

.views .active {
  background-color: #cbe8f6;
  border: 1px solid #26a0da;
}

.views button:last-child .icon {
  width: 14px;
  height: 14px;
}

/* taskbar */
.taskbar {
  display: flex;
  justify-content: space-between;
  height: 40px;
  background: linear-gradient(90deg, #233a42, #20343f 60%, #1b2740 85%, #1a2641);
  color: #fff;
}

.apps {
  display: flex;
  gap: 1px;
}

.apps button {
  display: flex;
  align-items: center;
  justify-content: center;
  width: 48px;
  height: 40px;
}

.apps svg {
  width: 24px;
  height: 24px;
}

.apps .start {
  width: 16px;
  height: 16px;
}

.apps .tasks {
  width: 18px;
  height: 18px;
}

.apps .current {
  background: linear-gradient(#4f6167 38px, #76b9ed 38px);
}

.apps .running {
  background: linear-gradient(#76b9ed, #76b9ed) center bottom / 40px 2px no-repeat;
}

.tray {
  display: flex;
  align-items: center;
  padding-right: 4px;
}

.tray button {
  display: flex;
  align-items: center;
  justify-content: center;
  width: 24px;
}

.tray svg {
  width: 16px;
  height: 16px;
}

.tray .lang {
  width: 36px;
}

.tray .clock {
  display: block;
  width: 64px;
  line-height: 18px;
  text-align: center;
}

.tray .notify {
  width: 51px;
  height: 40px;
  padding-right: 4px;
  border-right: 1px solid #69748a;
}

.watermark {
  position: absolute;
  right: 35px;
  bottom: 33px;
  font-family: Roboto, sans-serif;
  font-size: 79px;
  font-weight: bold;
  line-height: 92px;
  background: linear-gradient(90deg, rgba(96, 112, 255, .3), rgba(200, 150, 245, .3));
  background-clip: text;
  -webkit-background-clip: text;
  color: transparent;
  -webkit-text-stroke: 1px rgba(255, 255, 255, .2);
  pointer-events: none;
}
```
